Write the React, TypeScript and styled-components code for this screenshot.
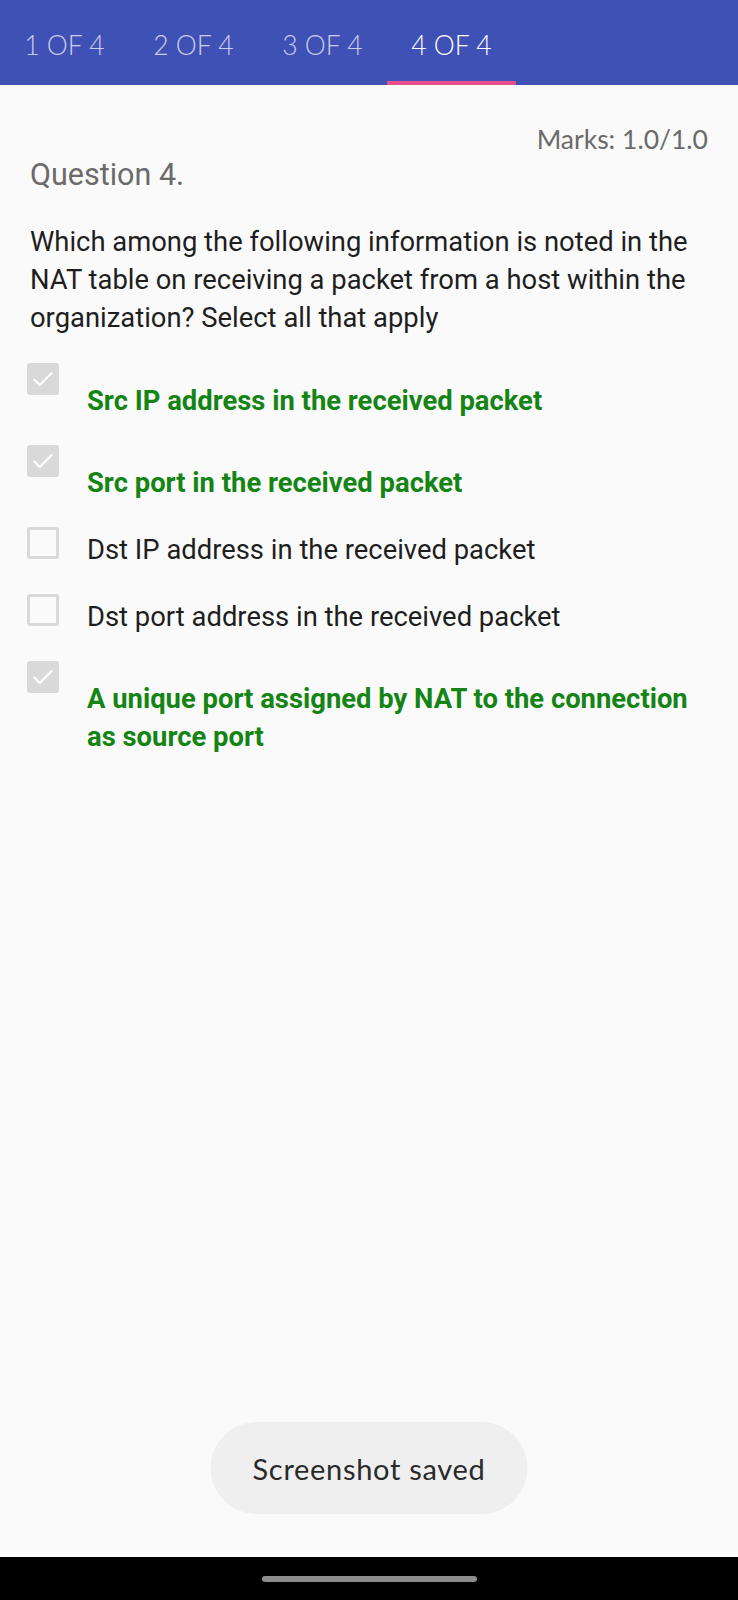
import React from "react";
import styled, { createGlobalStyle } from "styled-components";

const GlobalStyle = createGlobalStyle`
  html, body { margin: 0; padding: 0; background: #fafafa; }
  * { box-sizing: border-box; }
`;

const Page = styled.div`
  position: relative;
  width: 738px;
  min-height: 1600px;
  display: flex;
  flex-direction: column;
  background: #fafafa;
`;

const TabBar = styled.nav`
  height: 85px;
  background: #3f51b5;
  display: flex;
  flex-shrink: 0;
`;

const Tab = styled.div<{ $active?: boolean }>`
  width: 129px;
  height: 85px;
  display: flex;
  align-items: center;
  justify-content: center;
  padding-top: 8px;
  border-bottom: 4px solid ${(p) => (p.$active ? "#e8508c" : "transparent")};
  font-family: Lato, "Open Sans", sans-serif;
  font-weight: 300;
  font-size: 26.5px;
  color: ${(p) => (p.$active ? "#ffffff" : "rgba(255,255,255,0.72)")};
  white-space: nowrap;
`;

const Content = styled.main`
  flex: 1;
  display: flex;
  flex-direction: column;
  padding: 37px 30px 0 30px;
`;

const Marks = styled.div`
  text-align: right;
  font-family: Lato, "Open Sans", sans-serif;
  font-weight: 400;
  font-size: 26.5px;
  line-height: 34px;
  color: #6a6a6a;
`;

const QuestionTitle = styled.h2`
  margin: 1px 0 0 0;
  font-family: Roboto, "Liberation Sans", sans-serif;
  font-weight: 400;
  font-size: 30.5px;
  line-height: 36px;
  color: #6a6a6a;
`;

const QuestionText = styled.p`
  margin: 30px 0 0 0;
  font-family: Roboto, "Liberation Sans", sans-serif;
  font-weight: 400;
  font-size: 27.4px;
  line-height: 38px;
  color: #1e1e1e;
`;

const Options = styled.div`
  margin-top: 26px;
  display: flex;
  flex-direction: column;
  gap: 25px;
`;

const OptionRow = styled.div`
  display: flex;
  align-items: flex-start;
  gap: 28px;
  margin-left: -3px;
`;

const Box = styled.div<{ $checked?: boolean }>`
  width: 32px;
  height: 32px;
  flex-shrink: 0;
  border-radius: 3px;
  display: flex;
  align-items: center;
  justify-content: center;
  background: ${(p) => (p.$checked ? "#d9d9d9" : "transparent")};
  border: ${(p) => (p.$checked ? "none" : "3px solid #d9d9d9")};
`;

const OptionText = styled.div<{ $correct?: boolean }>`
  padding-top: ${(p) => (p.$correct ? "19px" : "4px")};
  font-family: Roboto, "Liberation Sans", sans-serif;
  font-size: 27.4px;
  line-height: 38px;
  font-weight: ${(p) => (p.$correct ? 700 : 400)};
  color: ${(p) => (p.$correct ? "#148514" : "#1e1e1e")};
`;

const Toast = styled.div`
  position: absolute;
  left: 50%;
  transform: translateX(-50%);
  bottom: 86px;
  width: 317px;
  height: 92px;
  border-radius: 46px;
  background: #efefef;
  display: flex;
  align-items: center;
  justify-content: center;
  font-family: Lato, "Open Sans", sans-serif;
  font-size: 29px;
  letter-spacing: 0.7px;
  color: #2a2a2a;
`;

const NavBar = styled.div`
  height: 43px;
  flex-shrink: 0;
  background: #000;
  display: flex;
  justify-content: center;
  padding-top: 19px;
`;

const Handle = styled.div`
  width: 215px;
  height: 6px;
  border-radius: 3px;
  background: #8c8c8c;
`;

const Check = () => (
  <svg width="26" height="26" viewBox="0 0 24 24" fill="none">
    <path d="M4 12.5l5 5L20 6.5" stroke="#ffffff" strokeWidth="2" strokeLinecap="round" strokeLinejoin="round" />
  </svg>
);

const options = [
  { text: "Src IP address in the received packet", checked: true },
  { text: "Src port in the received packet", checked: true },
  { text: "Dst IP address in the received packet", checked: false },
  { text: "Dst port address in the received packet", checked: false },
  { text: "A unique port assigned by NAT to the connection as source port", checked: true },
];

export default function App() {
  return (
    <>
      <GlobalStyle />
      <Page>
        <TabBar>
          <Tab>1 OF 4</Tab>
          <Tab>2 OF 4</Tab>
          <Tab>3 OF 4</Tab>
          <Tab $active>4 OF 4</Tab>
        </TabBar>
        <Content>
          <Marks>Marks: 1.0/1.0</Marks>
          <QuestionTitle>Question 4.</QuestionTitle>
          <QuestionText>
            Which among the following information is noted in the NAT table on receiving a packet from a host within the organization? Select all that apply
          </QuestionText>
          <Options>
            {options.map((o) => (
              <OptionRow key={o.text}>
                <Box $checked={o.checked}>{o.checked && <Check />}</Box>
                <OptionText $correct={o.checked}>{o.text}</OptionText>
              </OptionRow>
            ))}
          </Options>
        </Content>
        <Toast>Screenshot saved</Toast>
        <NavBar>
          <Handle />
        </NavBar>
      </Page>
    </>
  );
}
